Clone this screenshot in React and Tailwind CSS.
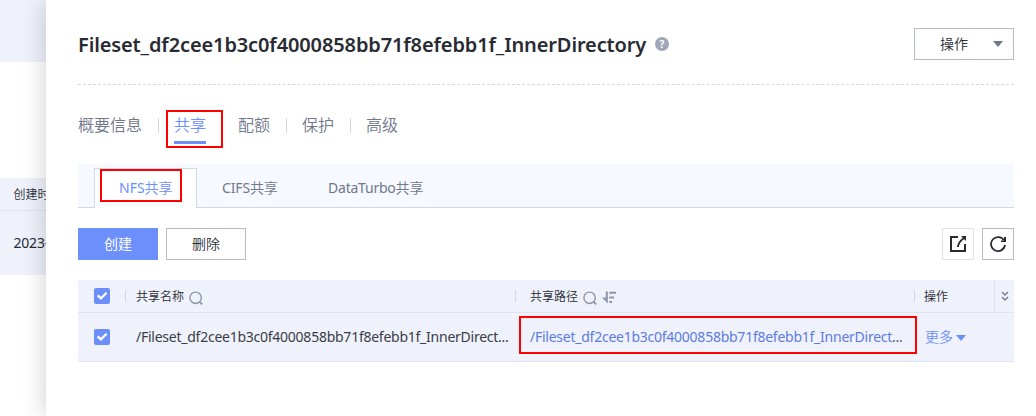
import React from "react";

const FILESET = "Fileset_df2cee1b3c0f4000858bb71f8efebb1f_InnerDirect";

function Checkbox() {
  return (
    <span className="flex h-4 w-4 shrink-0 items-center justify-center rounded-[2px] bg-[#6d8ffc]">
      <svg width="12" height="12" viewBox="0 0 12 12" fill="none">
        <path d="M1.6 5.4 L4.9 8.4 L10.6 2.8" stroke="#fff" strokeWidth="2.3" />
      </svg>
    </span>
  );
}

function SearchIcon() {
  return (
    <svg width="14" height="14" viewBox="0 0 14 14" fill="none" stroke="#8d94a8" strokeWidth="1.4">
      <circle cx="6.6" cy="6.8" r="5.7" />
      <path d="M10.6 10.8 L13.2 13.3" strokeWidth="1.8" />
    </svg>
  );
}

function SortIcon() {
  return (
    <svg width="14" height="13" viewBox="0 0 14 13" fill="#8d94a8">
      <path d="M3.8 0.5 H5.8 V12.5 L0 6.4 H3.8 Z" />
      <path d="M7.3 0.8 H14 V2.8 H7.3 Z M7.3 5.5 H12 V7.5 H7.3 Z M7.3 10 H10 V12 H7.3 Z" />
    </svg>
  );
}

function Divider() {
  return <span className="mt-[7px] h-[15px] w-px bg-[#d0d8e8]" />;
}

function Highlight({ className }) {
  return <span className={"pointer-events-none absolute border-2 border-[#fe0000] " + className} />;
}

export default function App() {
  return (
    <div className="relative h-[416px] w-full overflow-hidden bg-white font-['Noto_Sans','Noto_Sans_CJK_SC',sans-serif] font-[360] text-[#282b33]">
      <div className="flex h-full w-[240px] flex-col">
        <div className="h-[62px] bg-[#eff2fb]" />
        <div className="mt-[116px] h-[33px] border-b border-[#dfe4ee] bg-[#eff2fb] pl-[13.5px] text-[12px] leading-[34px]">创建时间</div>
        <div className="h-16 bg-[#eff2fb] pl-[13.5px] text-[14px] font-normal leading-[64px] tracking-[-0.2px]">2023-</div>
      </div>

      <main className="absolute inset-y-0 left-[46px] right-0 bg-white pl-8 pr-[22px] shadow-[0_0_24px_rgba(0,0,0,0.2)]">
        <header className="flex h-[85px] items-start justify-between border-b border-dashed border-[#d0d8e8] pt-7">
          <div className="flex items-center">
            <h1 className="h-8 w-[568px] whitespace-nowrap text-[20px] font-semibold leading-[33px] tracking-[-0.12px]">
              Fileset_df2cee1b3c0f4000858bb71f8efebb1f_InnerDirectory
            </h1>
            <span className="ml-[9px] flex h-[14px] w-[14px] items-center justify-center rounded-full bg-[#a1a7b9] text-[10px] font-bold leading-none text-white">?</span>
          </div>
          <button className="flex h-8 w-[100px] items-center border border-[#b6bbcf] pl-[25px] text-[14px]">
            <span className="-mt-[2px]">操作</span>
            <svg className="ml-[25px]" width="10" height="6" viewBox="0 0 10 6"><path d="M0 0 H10 L5 6 Z" fill="#70778a" /></svg>
          </button>
        </header>

        <nav className="mt-[26px] flex h-[33px] gap-[15.5px] text-[16px] leading-[29px] text-[#70778a]">
          <span>概要信息</span>
          <Divider />
          <span className="border-b-[3px] border-[#6d8ffc] text-[#6d8ffc]">共享</span>
          <Divider />
          <span>配额</span>
          <Divider />
          <span>保护</span>
          <Divider />
          <span>高级</span>
        </nav>

        <div className="mt-5 flex h-11 items-end border-b border-[#d0d8e8] bg-[#f6f9ff] pl-4 text-[14px] font-normal leading-[38px] text-[#70778a]">
          <span className="-mb-px h-10 w-[103px] border border-b-0 border-[#d0d8e8] bg-white pl-6 text-[#6d8ffc]">
            NFS<span className="font-[360]">共享</span>
          </span>
          <span className="h-[38px] w-[106px] pl-[25px] tracking-[-0.15px]">
            CIFS<span className="font-[360]">共享</span>
          </span>
          <span className="h-[38px] pl-[25px] tracking-[-0.22px]">
            DataTurbo<span className="font-[360]">共享</span>
          </span>
        </div>

        <div className="mt-5 flex h-8 gap-2 text-[14px]">
          <button className="w-20 bg-[#6d8ffc] pb-[2px] font-normal text-white">创建</button>
          <button className="w-20 border border-[#b6bbcf] pb-[2px]">删除</button>
          <button className="ml-auto flex w-8 items-center justify-center border border-[#dfe1e6]">
            <svg width="16" height="16" viewBox="0 0 16 16" fill="none" stroke="#282b33" strokeWidth="2">
              <path d="M8 1 H1 V15 H15 V8" />
              <path d="M8 11 C8 7 10 5 14 2" strokeWidth="1.8" />
              <path d="M11 0 H16 V5 Z" fill="#282b33" stroke="none" />
            </svg>
          </button>
          <button className="flex w-8 items-center justify-center border border-[#b6bbcf]">
            <svg width="16" height="16" viewBox="0 0 16 16" fill="none" stroke="#282b33" strokeWidth="1.8">
              <path d="M14 4.4 A7 7 0 1 0 15 8.8" />
              <path d="M16 1 V6 H11 V4.4 H14 V1 Z" fill="#282b33" stroke="none" />
            </svg>
          </button>
        </div>

        <section className="mt-5 bg-[#eff2fb]">
          <div className="flex h-[33px] items-center border-b border-[#dfe4ee] pl-4 text-[12px]">
            <Checkbox />
            <span className="ml-[15px] h-3 w-px bg-[#d0d8e8]" />
            <div className="flex w-[389px] items-center pl-[10px]">
              <span className="mt-[2px]">共享名称</span>
              <span className="ml-[5px] mt-[3px]"><SearchIcon /></span>
            </div>
            <span className="h-3 w-px bg-[#d0d8e8]" />
            <div className="flex w-[398px] items-center pl-[14px]">
              <span className="mt-[2px]">共享路径</span>
              <span className="ml-[5px] mt-[3px]"><SearchIcon /></span>
              <span className="ml-[5px] mt-[2px]"><SortIcon /></span>
            </div>
            <span className="h-3 w-px bg-[#d0d8e8]" />
            <span className="mt-[2px] w-[79px] pl-[9px]">操作</span>
            <span className="flex h-full flex-1 items-center justify-center border-l border-[#dfe4ee]">
              <svg width="8" height="10" viewBox="0 0 8 10" fill="none" stroke="#70778a" strokeWidth="1.4">
                <path d="M1 1 L4 4 L7 1 M1 6 L4 9 L7 6" />
              </svg>
            </span>
          </div>
          <div className="flex h-[49px] items-center whitespace-nowrap border-b border-[#dfe4ee] pl-4 text-[14px]">
            <Checkbox />
            <span className="-mt-px ml-[26px] w-[394px] font-normal tracking-[-0.25px] text-[#3a3d46]">/{FILESET}...</span>
            <span className="-mt-px w-[395px] font-normal tracking-[-0.25px] text-[#5e7ce0]">/{FILESET}<span className="text-[#575d6c]">...</span></span>
            <span className="flex items-center text-[#6d8ffc]">
              <span className="-mt-[2px]">更多</span>
              <svg className="ml-[3px] mt-[2px]" width="10" height="6" viewBox="0 0 10 6"><path d="M0 0 H10 L5 6 Z" fill="#6d8ffc" /></svg>
            </span>
          </div>
        </section>
      </main>

      <Highlight className="left-[166px] top-[110px] h-[38px] w-[57px]" />
      <Highlight className="left-[100px] top-[169px] h-[33px] w-[82px]" />
      <Highlight className="left-[519px] top-[316px] h-[38px] w-[398px]" />
    </div>
  );
}
